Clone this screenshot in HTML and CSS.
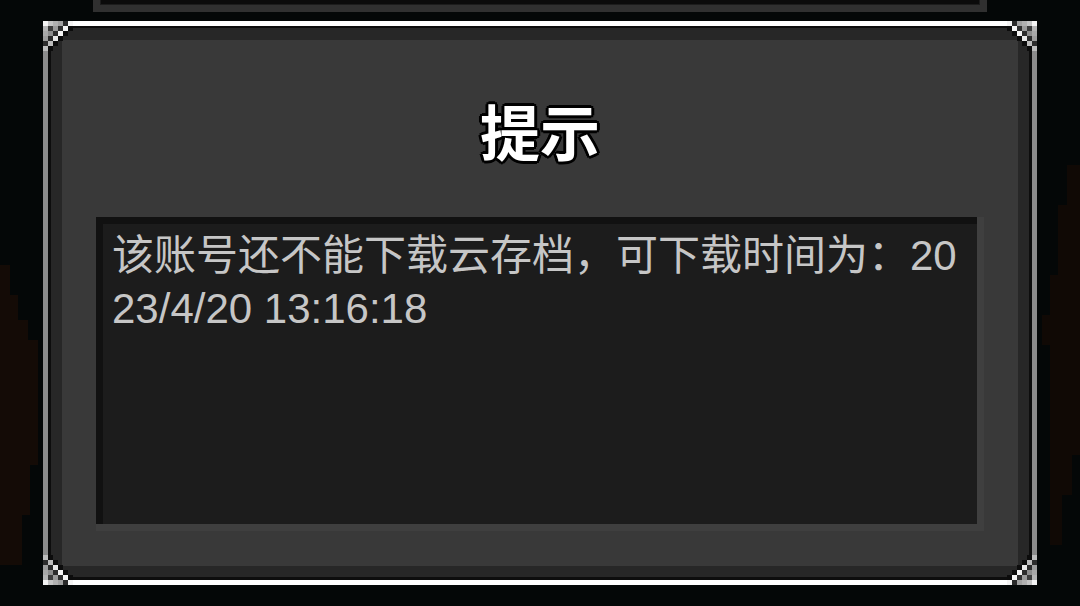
FILE: index.html
```html
<!DOCTYPE html>
<html lang="zh-CN">
<head>
  <meta charset="UTF-8" />
  <meta name="viewport" content="width=device-width, initial-scale=1.0"/>
  <title>提示</title>
  <link rel="stylesheet" href="styles.css">
</head>
<body>

  <!-- dimmed game scene behind the popup -->
  <div class="scene">
    <div class="rock rock-left"></div>
    <div class="rock rock-right"></div>
    <div class="back-panel"></div>
  </div>

  <div class="dialog">
    <svg class="corner tl" viewBox="0 0 30 30"><use href="#px-corner"/></svg>
    <svg class="corner tr" viewBox="0 0 30 30"><use href="#px-corner"/></svg>
    <svg class="corner bl" viewBox="0 0 30 30"><use href="#px-corner"/></svg>
    <svg class="corner br" viewBox="0 0 30 30"><use href="#px-corner"/></svg>

    <div class="dialog-body">
      <h1 class="title">提示</h1>
      <div class="msg-well">
        <div class="msg">该账号还不能下载云存档，可下载时间为：2023/4/20 13:16:18</div>
      </div>
    </div>
  </div>

  <svg width="0" height="0" style="position:absolute">
    <defs>
      <!-- pixel checker ornament, drawn for the top-left corner -->
      <g id="px-corner" shape-rendering="crispEdges">
        <rect x="0" y="0" width="5" height="5" fill="#f4f4f4"/>
        <rect x="5" y="0" width="5" height="5" fill="#c4c4c4"/>
        <rect x="10" y="0" width="5" height="5" fill="#b0b0b0"/>
        <rect x="15" y="0" width="5" height="5" fill="#a0a0a0"/>
        <rect x="20" y="0" width="5" height="5" fill="#2a2a2a"/>
        <rect x="25" y="0" width="5" height="5" fill="#f4f4f4"/>

        <rect x="0" y="5" width="5" height="5" fill="#b4b4b4"/>
        <rect x="5" y="5" width="5" height="5" fill="#3c3c3c"/>
        <rect x="10" y="5" width="5" height="5" fill="#9a9a9a"/>
        <rect x="15" y="5" width="5" height="5" fill="#2e2e2e"/>
        <rect x="20" y="5" width="5" height="5" fill="#f4f4f4"/>
        <rect x="25" y="5" width="5" height="5" fill="#0c0c0c"/>

        <rect x="0" y="10" width="5" height="5" fill="#a8a8a8"/>
        <rect x="5" y="10" width="5" height="5" fill="#8c8c8c"/>
        <rect x="10" y="10" width="5" height="5" fill="#2c2c2c"/>
        <rect x="15" y="10" width="5" height="5" fill="#f4f4f4"/>
        <rect x="20" y="10" width="5" height="5" fill="#0c0c0c"/>

        <rect x="0" y="15" width="5" height="5" fill="#9c9c9c"/>
        <rect x="5" y="15" width="5" height="5" fill="#2a2a2a"/>
        <rect x="10" y="15" width="5" height="5" fill="#e8e8e8"/>
        <rect x="15" y="15" width="5" height="5" fill="#0c0c0c"/>

        <rect x="0" y="20" width="5" height="5" fill="#2c2c2c"/>
        <rect x="5" y="20" width="5" height="5" fill="#bdbdbd"/>
        <rect x="10" y="20" width="5" height="5" fill="#0c0c0c"/>

        <rect x="0" y="25" width="5" height="5" fill="#bcbcbc"/>
        <rect x="5" y="25" width="5" height="5" fill="#0c0c0c"/>
      </g>
    </defs>
  </svg>

</body>
</html>
```

FILE: styles.css
```css
* {
  box-sizing: border-box;
}

html, body {
  margin: 0;
  width: 1080px;
  height: 606px;
  overflow: hidden;
}

body {
  background: #040707;
  padding: 21px 0 0 43px;
  font-family: "Liberation Sans", "Noto Sans CJK SC", sans-serif;
  position: relative;
}

/* ---------- background scene ---------- */

.scene {
  position: absolute;
  inset: 0;
}

.rock {
  position: absolute;
  background: #140b06;
}

.rock-left {
  left: 0;
  top: 265px;
  width: 38px;
  height: 341px;
  clip-path: polygon(0 0, 10px 0, 10px 30px, 18px 30px, 18px 55px, 28px 55px, 28px 75px, 38px 75px,
                     38px 200px, 30px 200px, 30px 250px, 22px 250px, 22px 300px, 0 300px);
}

.rock-right {
  right: 0;
  top: 165px;
  width: 38px;
  height: 441px;
  clip-path: polygon(25px 0, 38px 0, 38px 290px, 30px 290px, 30px 330px, 20px 330px, 20px 380px,
                     8px 380px, 8px 180px, 0 180px, 0 150px, 8px 150px, 8px 110px, 16px 110px,
                     16px 40px, 25px 40px);
  opacity: 0.75;
}

.back-panel {
  position: absolute;
  left: 93px;
  top: -30px;
  width: 894px;
  height: 42px;
  background: #0b0b0b;
  border: 7px solid #303030;
  box-shadow: inset 0 0 0 1px #1c1c1c;
}

/* ---------- popup frame ---------- */

.dialog {
  position: relative;
  width: 994px;
  height: 564px;
  border: 5px solid;
  border-color: #ffffff #8c8c8c #ffffff #8c8c8c;
  background: #0d0d0d;
  padding: 2px 3px 3px 3px;
}

.dialog-body {
  height: 100%;
  border: 11px solid #272727;
  border-top-width: 12px;
  background: #393939;
  padding: 60px 34px 35px;
}

.corner {
  position: absolute;
  width: 30px;
  height: 30px;
}

.corner.tl { top: -5px; left: -5px; }
.corner.tr { top: -5px; right: -5px; transform: scaleX(-1); }
.corner.bl { bottom: -5px; left: -5px; transform: scaleY(-1); }
.corner.br { bottom: -5px; right: -5px; transform: scale(-1, -1); }

.title {
  margin: 0 0 57px;
  height: 60px;
  font-family: "Noto Sans CJK SC", sans-serif;
  font-size: 60px;
  line-height: 60px;
  font-weight: 700;
  color: #ffffff;
  text-align: center;
  text-shadow:
    3px 0 0 #000, -3px 0 0 #000, 0 3px 0 #000, 0 -3px 0 #000,
    2px 2px 0 #000, -2px 2px 0 #000, 2px -2px 0 #000, -2px -2px 0 #000;
}

/* sunken message box: dark top/left edge, light bottom/right edge */
.msg-well {
  height: 314px;
  background: #3f3f3f;
  padding: 0 7px 7px 0;
}

.msg {
  height: 100%;
  background: #1c1c1c;
  border-top: 7px solid #111111;
  border-left: 7px solid #111111;
  padding: 5px 9px 0 9px;
  color: #c6c6c6;
  font-size: 42px;
  line-height: 53px;
  word-break: break-all;
}
```
